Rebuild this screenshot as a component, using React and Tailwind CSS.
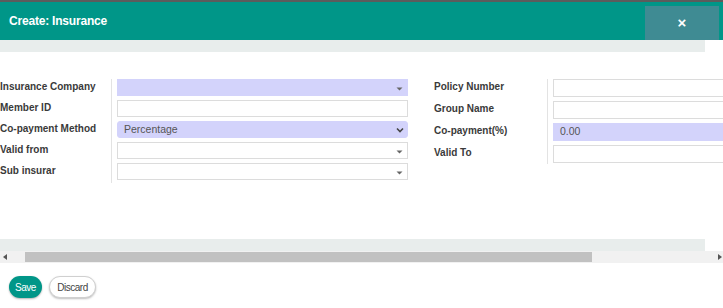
import React from 'react'

const font = { fontFamily: '"Liberation Sans", Arial, sans-serif' }

function Arrow({ chevron }) {
  if (chevron) {
    return (
      <svg width="8" height="6" viewBox="0 0 8 6" className="mr-[3px]">
        <path d="M1 1.5 L4 4.5 L7 1.5" fill="none" stroke="#444" strokeWidth="1.6" />
      </svg>
    )
  }
  return (
    <svg width="7" height="4" viewBox="0 0 7 4" className="mr-[4px] mt-[2px]">
      <path d="M0.5 0.5 L6.5 0.5 L3.5 3.5 Z" fill="#666" />
    </svg>
  )
}

function Field({ kind = 'input', value = '', tint, rounded, h = 'h-[17px]', w = 'w-[291px]' }) {
  const bg = tint ? 'bg-[#d3d3fb] border-[#d3d3fb]' : 'bg-white border-[#dcdcdc]'
  return (
    <div
      className={`${h} ${w} ${bg} ${rounded ? 'rounded-[3px]' : ''} border flex items-center justify-between pl-[6px] text-[10.5px] text-[#555] shrink-0`}
    >
      <span>{value}</span>
      {kind === 'select' && <Arrow />}
      {kind === 'chevron' && <Arrow chevron />}
    </div>
  )
}

function Label({ children, h }) {
  return (
    <div className={`${h} flex items-start text-[10px] font-bold text-[#3a3a3a] whitespace-nowrap`}>
      {children}
    </div>
  )
}

export default function App() {
  const left = [
    { label: 'Insurance Company', kind: 'select', tint: true },
    { label: 'Member ID' },
    { label: 'Co-payment Method', kind: 'chevron', tint: true, rounded: true, value: 'Percentage' },
    { label: 'Valid from', kind: 'select' },
    { label: 'Sub insurar', kind: 'select' }
  ]
  const right = [
    { label: 'Policy Number' },
    { label: 'Group Name' },
    { label: 'Co-payment(%)', tint: true, value: '0.00' },
    { label: 'Valid To' }
  ]

  return (
    <div className="w-[723px] h-[308px] bg-white overflow-hidden" style={font}>
      {/* top strip from page behind */}
      <div className="h-[2px] bg-[#5c5c5c]" />

      {/* Header */}
      <div className="h-[38px] bg-[#009688] flex items-center justify-between">
        <span className="pl-[9px] text-[12px] font-bold text-white tracking-[-0.2px]">Create: Insurance</span>
        <div className="self-end h-[34px] w-[74px] mr-[4px] bg-[#3f8b93] flex items-center justify-center text-white text-[15px] font-bold">
          ×
        </div>
      </div>
      <div className="w-[705px] h-[12px] bg-[#e8edec]" />

      {/* Form */}
      <div className="flex items-start pt-[27px] h-[187px] overflow-hidden">
        <div className="flex">
          <div className="w-[111px] flex flex-col gap-[4px]">
            {left.map((r) => (
              <Label key={r.label} h="h-[17px]">{r.label}</Label>
            ))}
          </div>
          <div className="border-l border-[#e3e3e3] pl-[5px] pb-[3px] flex flex-col gap-[4px]">
            {left.map((r) => (
              <Field key={r.label} kind={r.kind} tint={r.tint} rounded={r.rounded} value={r.value} />
            ))}
          </div>
        </div>

        <div className="flex ml-[26px] shrink-0">
          <div className="w-[113px] flex flex-col gap-[4px]">
            {right.map((r) => (
              <Label key={r.label} h="h-[18px]">{r.label}</Label>
            ))}
          </div>
          <div className="border-l border-[#e3e3e3] pl-[5px] pb-[1px] flex flex-col gap-[4px]">
            {right.map((r) => (
              <Field key={r.label} tint={r.tint} value={r.value} h="h-[18px]" w="w-[200px]" />
            ))}
          </div>
        </div>
      </div>

      {/* bottom bar + scrollbar */}
      <div className="w-[705px] h-[12px] bg-[#e8edec]" />
      <div className="h-[12px] bg-[#f1f1f1] flex items-center">
        <div className="w-[25px] flex items-center pl-[3px]">
          <svg width="4" height="6" viewBox="0 0 4 6">
            <path d="M4 0 L0 3 L4 6 Z" fill="#555" />
          </svg>
        </div>
        <div className="w-[567px] h-[10px] bg-[#c1c1c1]" />
        <div className="flex-1 flex justify-end pr-[1px]">
          <svg width="4" height="6" viewBox="0 0 4 6">
            <path d="M0 0 L4 3 L0 6 Z" fill="#555" />
          </svg>
        </div>
      </div>

      {/* Buttons */}
      <div className="flex items-center gap-[7px] pl-[9px] pt-[13px]">
        <button className="h-[22px] w-[33px] rounded-full bg-[#009688] text-white text-[10px] tracking-[-0.5px] shadow-[0_1px_2px_rgba(0,0,0,0.3)]">
          Save
        </button>
        <button className="h-[22px] w-[47px] rounded-full bg-white border border-[#d0d0d0] text-[#444] text-[10px] tracking-[-0.5px] shadow-[0_1px_2px_rgba(0,0,0,0.25)]">
          Discard
        </button>
      </div>
    </div>
  )
}
